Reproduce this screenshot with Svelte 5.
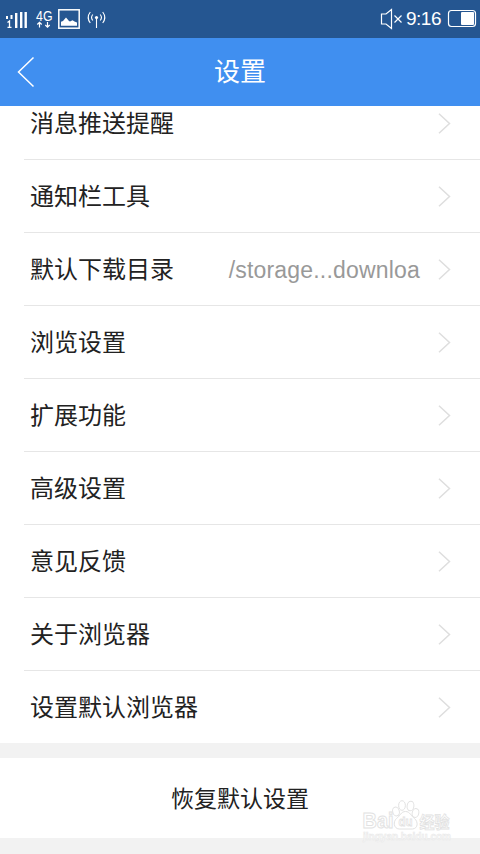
<script>
  const items = [
    { label: '消息推送提醒' },
    { label: '通知栏工具' },
    { label: '默认下载目录', value: '/storage...downloa' },
    { label: '浏览设置' },
    { label: '扩展功能' },
    { label: '高级设置' },
    { label: '意见反馈' },
    { label: '关于浏览器' },
    { label: '设置默认浏览器' }
  ];
</script>

<div class="screen">
  <div class="status">
    <svg class="left" width="112" height="38" viewBox="0 0 112 38" fill="none">
      <g fill="#fff">
        <rect x="6" y="16" width="2" height="3" />
        <rect x="10.5" y="15" width="2" height="4" />
        <rect x="15" y="13" width="2.4" height="15" />
        <rect x="20" y="12" width="2.4" height="16" />
        <rect x="24.5" y="12" width="2.4" height="16" />
      </g>
      <path d="M7.5 22.5l2-1.5v6M7.5 27.3h4" stroke="#fff" stroke-width="1.3" />
      <text x="36" y="21" font-size="15.5" textLength="16.5" lengthAdjust="spacingAndGlyphs" fill="#fff">4G</text>
      <path d="M39.5 27.5v-5M37.3 24.5l2.2-2.2 2.2 2.2M47.5 22v5M45.3 25l2.2 2.2 2.2-2.2" stroke="#fff" stroke-width="1.2" />
      <rect x="58.8" y="9.8" width="20.4" height="18.4" stroke="#fff" stroke-width="1.5" />
      <path d="M61 25.7v-4l2-.7 3-3.5 3 3.5 1 .5 2.5-1.2 2 1.2 2.5 1v3.2z" fill="#fff" />
      <path d="M96.5 18v10M92.8 14.5q-2.5 3 0 6M100.2 14.5q2.5 3 0 6M90.3 12q-4.2 5.5 0 11M102.7 12q4.2 5.5 0 11" stroke="#fff" stroke-width="1.1" />
      <circle cx="96.5" cy="17.5" r="1.6" fill="#fff" />
    </svg>
    <div class="right">
      <svg width="24" height="24" viewBox="380 8 24 24" fill="none" stroke="#fff" stroke-width="1.2">
        <path d="M391.5 10.5v19l-5.5-4.5h-4.5v-10h4.5zM394.5 16.5l7 7M401.5 16.5l-7 7" />
      </svg>
      <span class="time">9:16</span>
      <svg width="30" height="20" viewBox="447 9 30 20">
        <rect x="448.5" y="10.5" width="27" height="16" rx="3" fill="none" stroke="#fff" stroke-width="1.2" />
        <rect x="461" y="12" width="13" height="13" rx="1" fill="#fff" />
      </svg>
    </div>
  </div>

  <header>
    <svg class="back" width="18" height="32" viewBox="0 0 18 32" fill="none" stroke="#fff" stroke-width="1.5">
      <path d="M16.5 1.5L1.5 16l15 14.5" />
    </svg>
    <h1>设置</h1>
  </header>

  <div class="list">
    {#each items as item}
      <div class="row">
        <span class="label">{item.label}</span>
        {#if item.value}<span class="value">{item.value}</span>{/if}
        <svg width="13" height="21" viewBox="0 0 13 21" fill="none" stroke="#dedede" stroke-width="1.5">
          <path d="M1 .8l10.5 9.7L1 20.2" />
        </svg>
      </div>
    {/each}
  </div>

  <div class="reset">恢复默认设置</div>

  <svg class="mark" width="96" height="52" viewBox="358 796 96 52" fill="#fff" stroke="#e2e2e2" stroke-width="1">
    <g font-weight="bold">
      <text x="362.5" y="828" font-size="22" textLength="31" lengthAdjust="spacingAndGlyphs">Bai</text>
      <ellipse cx="396" cy="811.5" rx="3.3" ry="4.5" transform="rotate(-15 396 811.5)" />
      <ellipse cx="402" cy="805.5" rx="3.4" ry="4.8" />
      <ellipse cx="410.5" cy="806" rx="3.4" ry="4.8" transform="rotate(8 410.5 806)" />
      <ellipse cx="415.5" cy="813" rx="3.3" ry="4.5" transform="rotate(15 415.5 813)" />
      <path d="M405.5 811.5C401 811.5 400 816 396.5 818.5C393 821.5 393.5 828.5 399 829H412.5C418 828.5 418.5 822 414.5 818.5C411 816 410 811.5 405.5 811.5Z" />
      <text x="398.5" y="826" font-size="12.5" stroke-width=".8" textLength="14" lengthAdjust="spacingAndGlyphs">du</text>
      <text x="419.5" y="827.5" font-size="16" stroke-width=".8" textLength="30" lengthAdjust="spacingAndGlyphs">经验</text>
      <text class="site" x="363" y="839.5" font-size="10.5" stroke="#e8e8e8" stroke-width=".5" textLength="88" lengthAdjust="spacingAndGlyphs">jingyan.baidu.com</text>
    </g>
  </svg>
</div>

<style>
  :global(body) { margin: 0; }
  .screen {
    position: relative;
    width: 480px;
    height: 854px;
    overflow: hidden;
    display: flex;
    flex-direction: column;
    background: #f2f2f2;
    font-family: "Liberation Sans", "Noto Sans CJK SC", sans-serif;
    color: #222;
  }
  svg { display: block; flex: none; }
  .status {
    height: 38px;
    flex: none;
    display: flex;
    justify-content: space-between;
    background: #255691;
    color: #fff;
  }
  .right {
    display: flex;
    align-items: center;
    padding-right: 3px;
  }
  .time {
    width: 41px;
    padding-left: 2px;
    font-size: 19px;
    line-height: 40px;
    letter-spacing: -0.5px;
  }
  header {
    height: 68px;
    flex: none;
    display: grid;
    grid-template-columns: 60px 1fr 60px;
    align-items: center;
    background: #408ff0;
    color: #fff;
  }
  .back { margin-left: 17px; }
  h1 {
    margin: 0;
    text-align: center;
    font-size: 26px;
    line-height: 38px;
    font-weight: 400;
  }
  .list {
    height: 637px;
    flex: none;
    display: flex;
    flex-direction: column;
    justify-content: flex-end;
    overflow: hidden;
    background: #fff;
  }
  .row {
    height: 72px;
    flex: none;
    display: flex;
    align-items: center;
    margin-left: 24px;
    padding: 0 29px 0 6px;
    border-bottom: 1px solid #e6e6e6;
  }
  .row:last-child { border-bottom: 0; }
  .label {
    flex: 1;
    padding-top: 2px;
    font-size: 24px;
    line-height: 36px;
  }
  .value {
    margin-right: 18px;
    padding-top: 2px;
    font-size: 23px;
    line-height: 34px;
    letter-spacing: 0.19px;
    color: #999;
  }
  .reset {
    height: 80px;
    flex: none;
    margin-top: 15px;
    background: #fff;
    text-align: center;
    font-size: 23px;
    line-height: 82px;
  }
  .mark {
    position: absolute;
    left: 358px;
    top: 796px;
  }
  .site { fill: #f8f8f8; }
</style>
